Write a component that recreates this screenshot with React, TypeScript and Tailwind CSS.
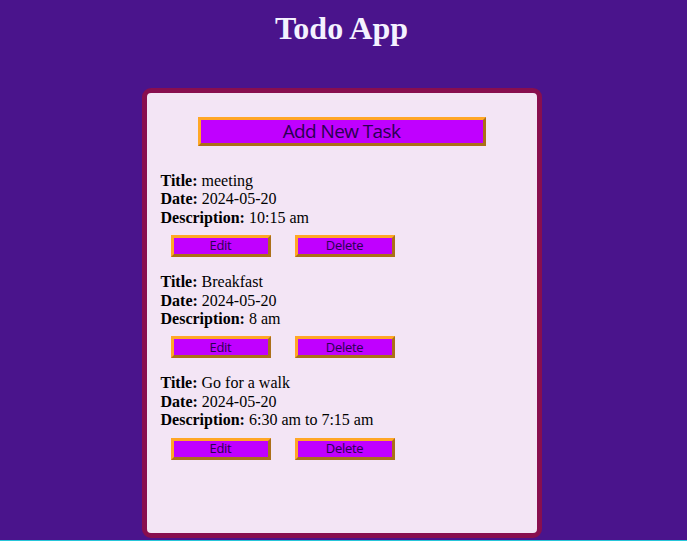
const tasks = [
  { title: "meeting", date: "2024-05-20", description: "10:15 am" },
  { title: "Breakfast", date: "2024-05-20", description: "8 am" },
  { title: "Go for a walk", date: "2024-05-20", description: "6:30 am to 7:15 am" },
];

const btn =
  "border-[3px] [border-style:outset] border-[#ffa726] bg-[#c000ff] text-[#2a0052] font-['Open_Sans',sans-serif] flex items-center justify-center";

function TaskItem({ task }: { task: (typeof tasks)[number] }) {
  return (
    <div className="mb-[16px]">
      <div className="font-['Liberation_Serif',serif] text-[16px] leading-[18.4px] text-black">
        <p>
          <b>Title:</b> {task.title}
        </p>
        <p>
          <b>Date:</b> {task.date}
        </p>
        <p>
          <b>Description:</b> {task.description}
        </p>
      </div>
      <div className="flex gap-[24px] mt-[8px] ml-[10px]">
        <button className={`${btn} w-[100px] h-[22px] text-[13px] tracking-[-0.3px]`}>Edit</button>
        <button className={`${btn} w-[100px] h-[22px] text-[13px] tracking-[-0.3px]`}>Delete</button>
      </div>
    </div>
  );
}

export default function App() {
  return (
    <div className="h-[541px] bg-[#4a148c] border-b border-[#26c6da] pr-1 overflow-hidden">
      <h1 className="pt-[10px] text-center font-['Liberation_Serif',serif] font-bold text-[32px] leading-[37px] text-[#f4f2ff]">
        Todo App
      </h1>
      <div className="mx-auto mt-[41px] w-[400px] h-[450px] rounded-[9px] border-[5px] border-[#880e4f] bg-[#f3e5f5] pt-[24px]">
        <button
          className={`${btn} mx-auto w-[288px] h-[29px] text-[19px] tracking-[-0.6px]`}
        >
          Add New Task
        </button>
        <div className="pt-[26px] pl-[14px]">
          {tasks.map((t) => (
            <TaskItem key={t.title} task={t} />
          ))}
        </div>
      </div>
    </div>
  );
}
